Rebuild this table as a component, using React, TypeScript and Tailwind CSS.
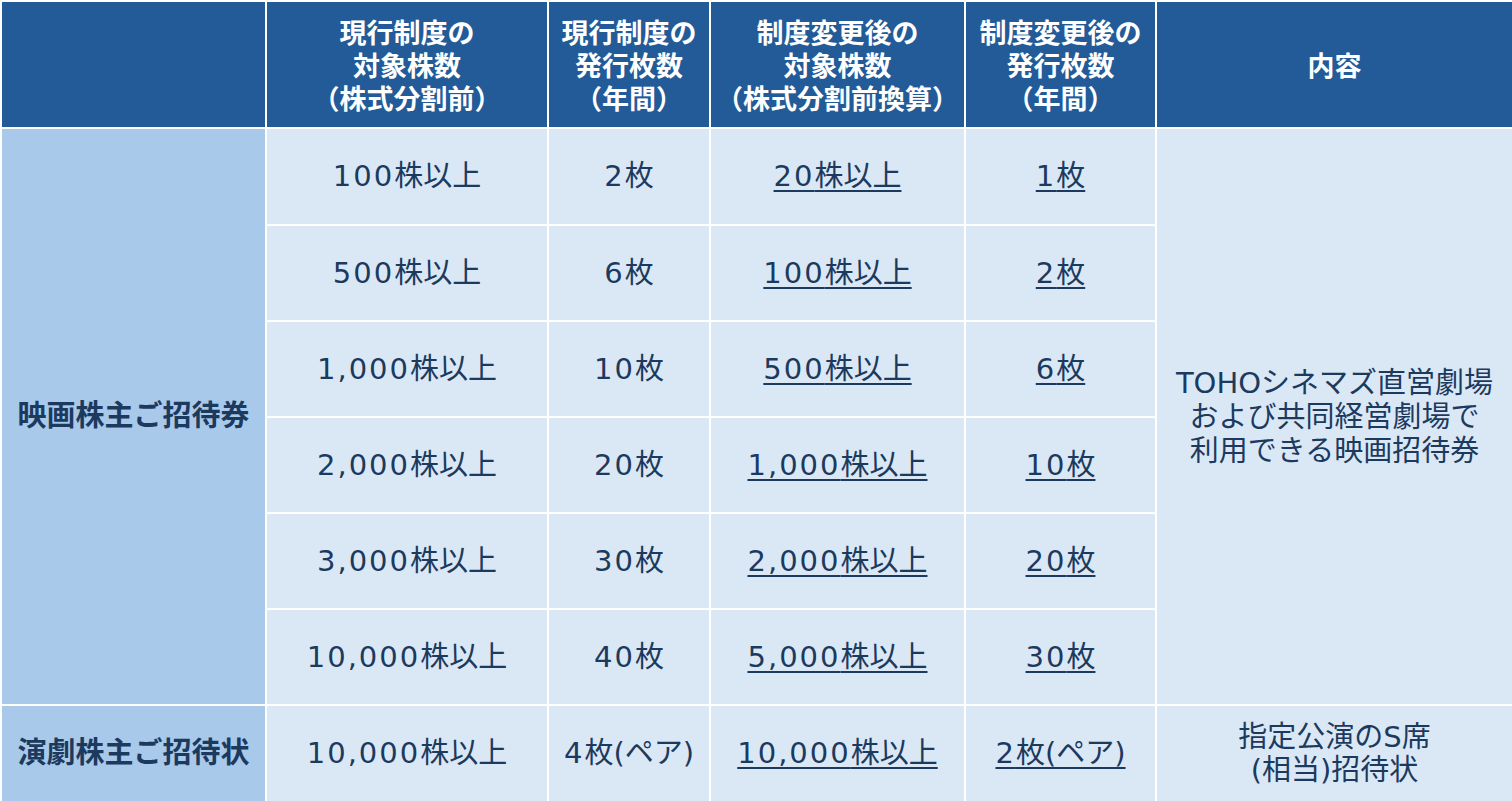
import React from "react";

const rows: [string, string, string, string][] = [
  ["100株以上", "2枚", "20株以上", "1枚"],
  ["500株以上", "6枚", "100株以上", "2枚"],
  ["1,000株以上", "10枚", "500株以上", "6枚"],
  ["2,000株以上", "20枚", "1,000株以上", "10枚"],
  ["3,000株以上", "30枚", "2,000株以上", "20枚"],
  ["10,000株以上", "40枚", "5,000株以上", "30枚"],
];

const headers: string[][] = [
  [],
  ["現行制度の", "対象株数", "（株式分割前）"],
  ["現行制度の", "発行枚数", "（年間）"],
  ["制度変更後の", "対象株数", "（株式分割前換算）"],
  ["制度変更後の", "発行枚数", "（年間）"],
  ["内容"],
];

function Text({ value }: { value: string }) {
  const m = value.match(/^([0-9,]+)(.*)$/);
  if (!m) return <>{value}</>;
  return (
    <>
      <span className="tracking-[2px]">{m[1]}</span>
      {m[2]}
    </>
  );
}

function Cell({ value, u }: { value: string; u?: boolean }) {
  return (
    <div className="flex items-center justify-center bg-[#dae8f6] text-[29px] leading-none text-[#1c3a5e]">
      <span className={u ? "underline decoration-[2px] underline-offset-[4px]" : ""}>
        <Text value={value} />
      </span>
    </div>
  );
}

export default function App() {
  return (
    <div className="h-[801px] w-[1512px] overflow-hidden bg-white font-['DejaVu_Sans','Noto_Sans_CJK_JP',sans-serif]">
      <div className="grid grid-cols-[263px_280px_160px_253px_189px_355px] grid-rows-[125px_95px_94px_94px_94px_94px_94px_95px] gap-[2px] p-[2px]">
        {headers.map((h, i) => (
          <div
            key={i}
            className="flex flex-col items-center justify-center bg-[#225b98] pt-[3px] text-[27px] font-bold leading-[33px] text-white"
          >
            {h.map((line, j) => (
              <span key={j}>{line}</span>
            ))}
          </div>
        ))}
        {rows.map((r, i) => (
          <React.Fragment key={i}>
            {i === 0 && (
              <div className="row-span-6 flex items-center justify-center bg-[#a9c9eb] text-[29px] font-bold text-[#1c3a5e]">
                映画株主ご招待券
              </div>
            )}
            <Cell value={r[0]} />
            <Cell value={r[1]} />
            <Cell value={r[2]} u />
            <Cell value={r[3]} u />
            {i === 0 && (
              <div className="row-span-6 flex flex-col items-center justify-center bg-[#dae8f6] text-[29px] leading-[34px] text-[#1c3a5e]">
                <span>TOHOシネマズ直営劇場</span>
                <span>および共同経営劇場で</span>
                <span>利用できる映画招待券</span>
              </div>
            )}
          </React.Fragment>
        ))}
        <div className="flex items-center justify-center bg-[#a9c9eb] text-[29px] font-bold text-[#1c3a5e]">
          演劇株主ご招待状
        </div>
        <Cell value="10,000株以上" />
        <Cell value="4枚(ペア)" />
        <Cell value="10,000株以上" u />
        <Cell value="2枚(ペア)" u />
        <div className="flex flex-col items-center justify-center bg-[#dae8f6] text-[29px] leading-[33px] text-[#1c3a5e]">
          <span>指定公演のS席</span>
          <span>(相当)招待状</span>
        </div>
      </div>
    </div>
  );
}
